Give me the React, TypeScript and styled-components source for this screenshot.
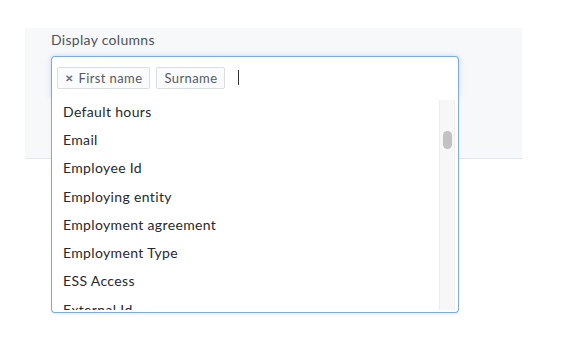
import React from 'react';
import styled, { createGlobalStyle } from 'styled-components';

const GlobalStyle = createGlobalStyle`
  html, body {
    margin: 0;
    padding: 0;
    background: #ffffff;
  }
  body {
    font-family: Lato, "Open Sans", Arial, sans-serif;
    -webkit-font-smoothing: antialiased;
  }
`;

const Page = styled.div`
  width: 568px;
  height: 348px;
  padding: 28px 0 0 25px;
  box-sizing: border-box;
`;

const Panel = styled.section`
  width: 497px;
  height: 131px;
  box-sizing: border-box;
  padding: 3px 0 0 26px;
  background: #f7f8fa;
  border-bottom: 1px solid #e4e7eb;
`;

const Label = styled.div`
  font-size: 14px;
  line-height: 17px;
  font-weight: 400;
  letter-spacing: 0.3px;
  color: #4d525a;
  margin-bottom: 8px;
`;

const Select = styled.div`
  position: relative;
  width: 408px;
`;

const Control = styled.div`
  display: flex;
  align-items: center;
  gap: 6px;
  height: 42px;
  box-sizing: border-box;
  padding: 0 0 0 5px;
  background: #ffffff;
  border: 1px solid #7ea9e1;
  border-bottom: none;
  border-radius: 4px 4px 0 0;
  box-shadow: 0 0 5px rgba(96, 156, 230, 0.35);
`;

const Chip = styled.span`
  display: inline-flex;
  align-items: center;
  gap: 5px;
  height: 22px;
  box-sizing: border-box;
  padding: 0 7px 0 7px;
  border: 1px solid #dadde1;
  border-radius: 2px;
  background: #fafbfc;
  font-size: 13px;
  letter-spacing: 0.4px;
  color: #555a62;
`;

const Remove = styled.span`
  font-size: 10px;
  font-weight: 700;
  color: #6b7079;
`;

const Caret = styled.span`
  width: 1px;
  height: 15px;
  margin-left: 7px;
  background: #333;
`;

const Menu = styled.div`
  position: absolute;
  top: 100%;
  left: 0;
  right: 0;
  height: 215px;
  box-sizing: border-box;
  display: flex;
  padding: 0 3px 2px 0;
  background: #ffffff;
  border: 1px solid #7ea9e1;
  border-top: none;
  border-radius: 0 0 4px 4px;
  box-shadow: 0 2px 3px rgba(0, 0, 0, 0.06);
`;

const Options = styled.ul`
  flex: 1;
  list-style: none;
  margin: 0;
  padding: 0;
  overflow: hidden;
`;

const Option = styled.li`
  height: 28.3px;
  display: flex;
  align-items: center;
  padding-left: 11px;
  font-size: 14px;
  letter-spacing: 0.35px;
  color: #26292d;
  margin-top: 0;
  &:first-child {
    margin-top: -1px;
  }
`;

const Track = styled.div`
  width: 16px;
  margin-top: 2px;
  box-sizing: border-box;
  background: #f7f7f7;
  border-left: 1px solid #ebebeb;
  border-right: 1px solid #efefef;
  padding: 31px 0 0 3px;
`;

const Thumb = styled.div`
  width: 9px;
  height: 18px;
  border-radius: 5px;
  background: #c2c2c2;
`;

const options = [
  'Default hours',
  'Email',
  'Employee Id',
  'Employing entity',
  'Employment agreement',
  'Employment Type',
  'ESS Access',
  'External Id',
];

export default function App() {
  return (
    <>
      <GlobalStyle />
      <Page>
        <Panel>
          <Label>Display columns</Label>
          <Select>
            <Control>
              <Chip>
                <Remove>✕</Remove>
                First name
              </Chip>
              <Chip>Surname</Chip>
              <Caret />
            </Control>
            <Menu>
              <Options>
                {options.map(o => (
                  <Option key={o}>{o}</Option>
                ))}
              </Options>
              <Track>
                <Thumb />
              </Track>
            </Menu>
          </Select>
        </Panel>
      </Page>
    </>
  );
}
